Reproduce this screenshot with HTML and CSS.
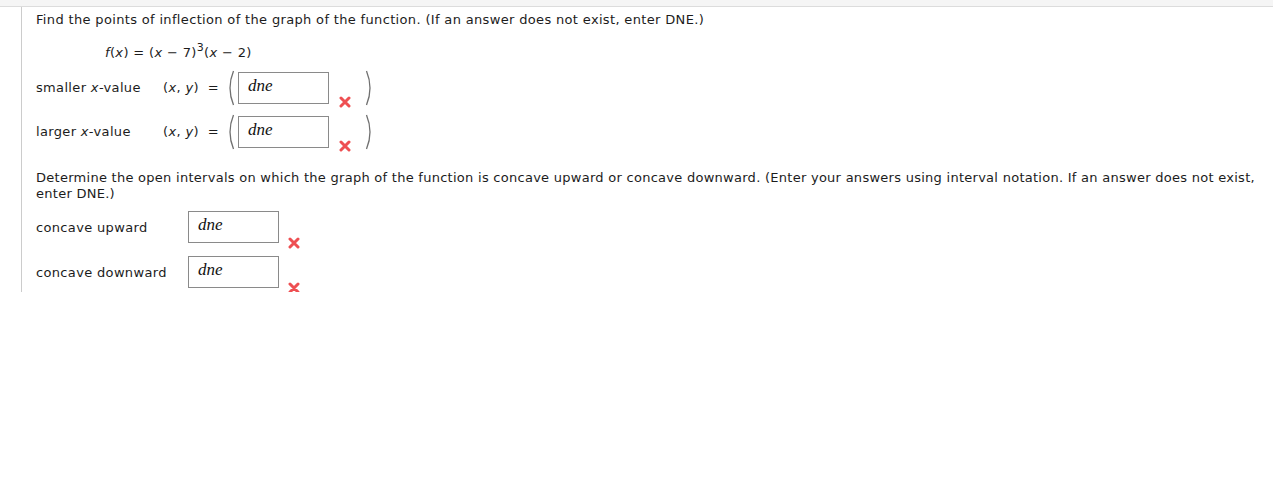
FILE: index.html
```html
<!DOCTYPE html>
<html>
<head>
<meta charset="utf-8">
<link rel="stylesheet" href="styles.css">
</head>
<body>
<div class="topbar"></div>
<div class="question">
  <p class="line">Find the points of inflection of the graph of the function. (If an answer does not exist, enter DNE.)</p>
  <p class="formula"><i>f</i>(<i>x</i>) = (<i>x</i> &minus; 7)<sup>3</sup>(<i>x</i> &minus; 2)</p>

  <div class="row pt-row">
    <span class="label pt-label">smaller <i>x</i>-value</span>
    <span class="xy">(<i>x</i>, <i>y</i>)&nbsp; =</span>
    <svg class="paren" width="9" height="36" viewBox="0 0 9 36"><path d="M7.5 1 Q0.5 18 7.5 35" fill="none" stroke="#707070" stroke-width="1.3"/></svg>
    <span class="box box-pt">dne</span>
    <svg class="xmark" width="12" height="12" viewBox="0 0 12 12"><path d="M2 2 L10 10 M10 2 L2 10" stroke="#ee4f52" stroke-width="3" stroke-linecap="round"/></svg>
    <svg class="paren rparen" width="9" height="36" viewBox="0 0 9 36"><path d="M1.5 1 Q8.5 18 1.5 35" fill="none" stroke="#707070" stroke-width="1.3"/></svg>
  </div>

  <div class="row pt-row">
    <span class="label pt-label">larger <i>x</i>-value</span>
    <span class="xy">(<i>x</i>, <i>y</i>)&nbsp; =</span>
    <svg class="paren" width="9" height="36" viewBox="0 0 9 36"><path d="M7.5 1 Q0.5 18 7.5 35" fill="none" stroke="#707070" stroke-width="1.3"/></svg>
    <span class="box box-pt">dne</span>
    <svg class="xmark" width="12" height="12" viewBox="0 0 12 12"><path d="M2 2 L10 10 M10 2 L2 10" stroke="#ee4f52" stroke-width="3" stroke-linecap="round"/></svg>
    <svg class="paren rparen" width="9" height="36" viewBox="0 0 9 36"><path d="M1.5 1 Q8.5 18 1.5 35" fill="none" stroke="#707070" stroke-width="1.3"/></svg>
  </div>

  <p class="para">Determine the open intervals on which the graph of the function is concave upward or concave downward. (Enter your answers using interval notation. If an answer does not exist, enter DNE.)</p>

  <div class="row cc-row">
    <span class="label cc-label">concave upward</span>
    <span class="box box-cc">dne</span>
    <svg class="xmark" width="12" height="12" viewBox="0 0 12 12"><path d="M2 2 L10 10 M10 2 L2 10" stroke="#ee4f52" stroke-width="3" stroke-linecap="round"/></svg>
  </div>

  <div class="row cc-row">
    <span class="label cc-label">concave downward</span>
    <span class="box box-cc">dne</span>
    <svg class="xmark" width="12" height="12" viewBox="0 0 12 12"><path d="M2 2 L10 10 M10 2 L2 10" stroke="#ee4f52" stroke-width="3" stroke-linecap="round"/></svg>
  </div>
</div>
</body>
</html>
```

FILE: styles.css
```css
html, body {
  margin: 0;
  padding: 0;
  background: #ffffff;
}
body {
  font-family: "DejaVu Sans", Verdana, sans-serif;
  font-size: 13px;
  letter-spacing: 0.34px;
  color: #1c1c1c;
}
.topbar {
  height: 6px;
  background: #f5f5f5;
  border-bottom: 1px solid #dcdcdc;
}
.question {
  margin-left: 21px;
  border-left: 1px solid #cccccc;
  padding: 5px 0 4px 14px;
}
.line {
  margin: 0;
  line-height: 16px;
}
.formula {
  margin: 17px 0 0 69px;
  line-height: 16px;
}
.formula sup {
  font-size: 11px;
  line-height: 0;
  vertical-align: 6px;
}
.row {
  display: flex;
  align-items: flex-start;
  height: 32px;
}
.pt-row {
  margin-top: 11px;
}
.pt-row + .pt-row {
  margin-top: 12px;
}
.label {
  line-height: 32px;
}
.pt-label {
  width: 127px;
}
.cc-label {
  width: 152px;
  line-height: 34px;
}
.xy {
  line-height: 32px;
  width: 63px;
}
.paren {
  margin-top: -2px;
  flex: none;
}
.box {
  box-sizing: border-box;
  height: 32px;
  width: 91px;
  border: 1px solid #8a8a8a;
  font-family: "Liberation Serif", "Times New Roman", serif;
  font-style: italic;
  font-size: 17px;
  letter-spacing: 0;
  line-height: 26px;
  padding-left: 9px;
  color: #111;
  flex: none;
}
.box-pt {
  margin-left: 3px;
}
.xmark {
  flex: none;
  margin-top: 24px;
  margin-left: 10px;
}
.rparen {
  margin-left: 14px;
}
.para {
  margin: 22px 0 0 0;
  line-height: 16px;
  letter-spacing: 0.27px;
}
.cc-row {
  margin-top: 9px;
}
.cc-row + .cc-row {
  margin-top: 13px;
}
.cc-row .xmark {
  margin-top: 26px;
  margin-left: 9px;
}
```
